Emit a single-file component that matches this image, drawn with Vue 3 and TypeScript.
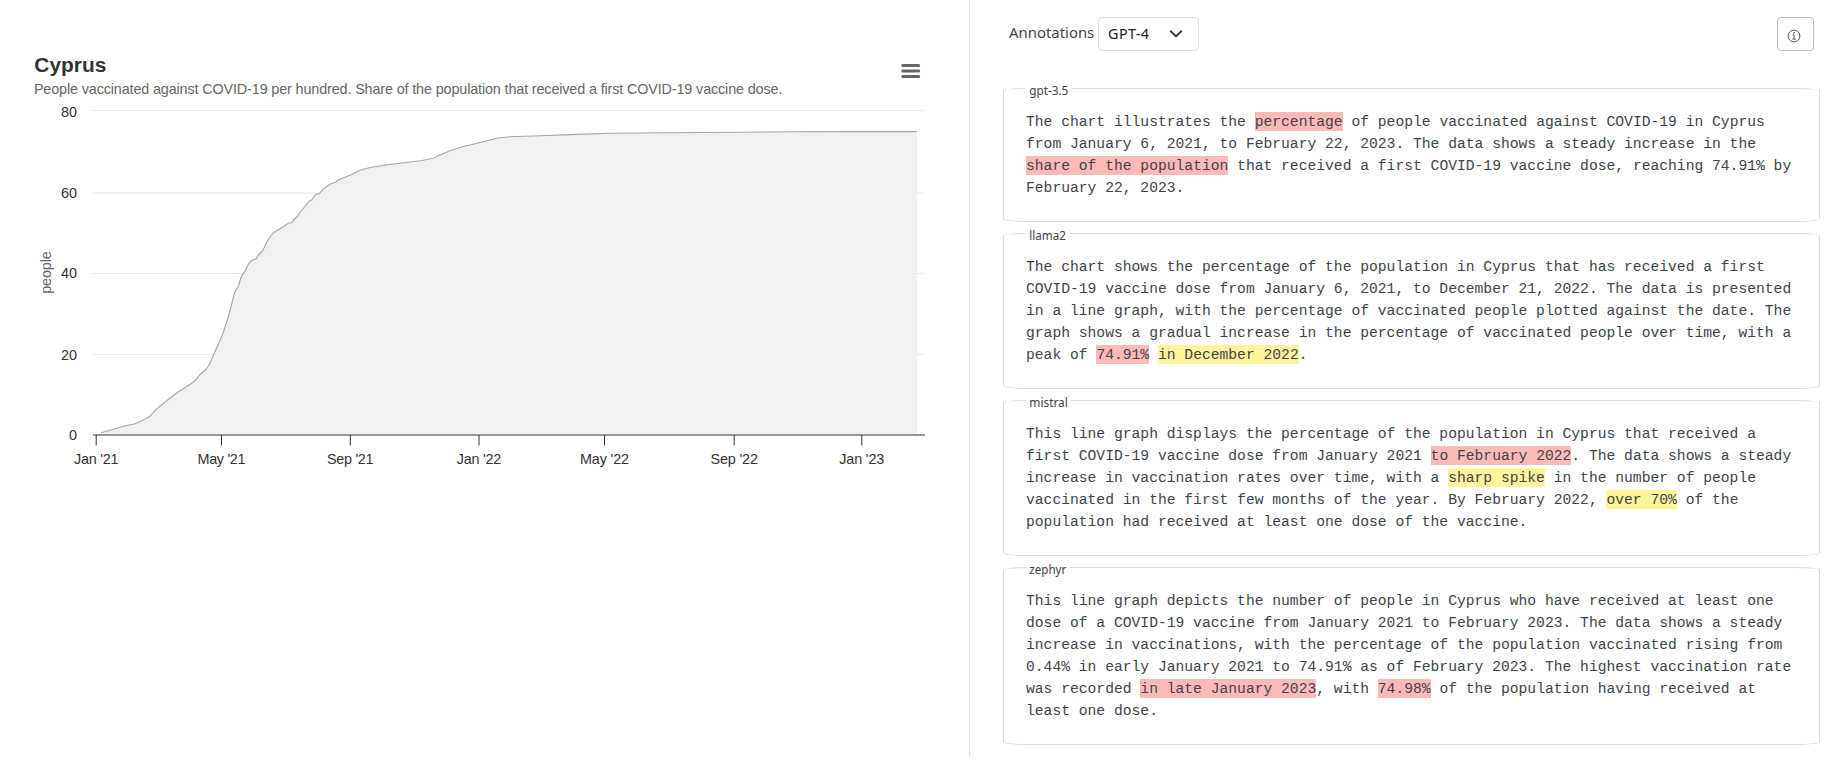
<script setup lang="ts">
interface Segment {
  text: string
  mark?: 'red' | 'yellow'
}

interface Annotation {
  model: string
  legendWidth: number
  textWidth: number
  lines: Segment[][]
}

const plain = (text: string): Segment[] => [{ text }]

const annotations: Annotation[] = [
  {
    model: 'gpt-3.5',
    legendWidth: 46,
    textWidth: 39,
    lines: [
      [{ text: 'The chart illustrates the ' }, { text: 'percentage', mark: 'red' }, { text: ' of people vaccinated against COVID-19 in Cyprus' }],
      plain('from January 6, 2021, to February 22, 2023. The data shows a steady increase in the'),
      [{ text: 'share of the population', mark: 'red' }, { text: ' that received a first COVID-19 vaccine dose, reaching 74.91% by' }],
      plain('February 22, 2023.'),
    ],
  },
  {
    model: 'llama2',
    legendWidth: 44,
    textWidth: 36.5,
    lines: [
      plain('The chart shows the percentage of the population in Cyprus that has received a first'),
      plain('COVID-19 vaccine dose from January 6, 2021, to December 21, 2022. The data is presented'),
      plain('in a line graph, with the percentage of vaccinated people plotted against the date. The'),
      plain('graph shows a gradual increase in the percentage of vaccinated people over time, with a'),
      [{ text: 'peak of ' }, { text: '74.91%', mark: 'red' }, { text: ' ' }, { text: 'in December 2022', mark: 'yellow' }, { text: '.' }],
    ],
  },
  {
    model: 'mistral',
    legendWidth: 45,
    textWidth: 38.5,
    lines: [
      plain('This line graph displays the percentage of the population in Cyprus that received a'),
      [{ text: 'first COVID-19 vaccine dose from January 2021 ' }, { text: 'to February 2022', mark: 'red' }, { text: '. The data shows a steady' }],
      [{ text: 'increase in vaccination rates over time, with a ' }, { text: 'sharp spike', mark: 'yellow' }, { text: ' in the number of people' }],
      [{ text: 'vaccinated in the first few months of the year. By February 2022, ' }, { text: 'over 70%', mark: 'yellow' }, { text: ' of the' }],
      plain('population had received at least one dose of the vaccine.'),
    ],
  },
  {
    model: 'zephyr',
    legendWidth: 44,
    textWidth: 37,
    lines: [
      plain('This line graph depicts the number of people in Cyprus who have received at least one'),
      plain('dose of a COVID-19 vaccine from January 2021 to February 2023. The data shows a steady'),
      plain('increase in vaccinations, with the percentage of the population vaccinated rising from'),
      plain('0.44% in early January 2021 to 74.91% as of February 2023. The highest vaccination rate'),
      [{ text: 'was recorded ' }, { text: 'in late January 2023', mark: 'red' }, { text: ', with ' }, { text: '74.98%', mark: 'red' }, { text: ' of the population having received at' }],
      plain('least one dose.'),
    ],
  },
]

const yTicks = [
  { label: '80', line: 110.5, base: 116.5 },
  { label: '60', line: 193, base: 197.5 },
  { label: '40', line: 273.5, base: 277.5 },
  { label: '20', line: 354.6, base: 359.5 },
]

const xTicks = [
  { label: "Jan '21", x: 96.2, width: 44.5 },
  { label: "May '21", x: 221.5, width: 48 },
  { label: "Sep '21", x: 350.3, width: 46.5 },
  { label: "Jan '22", x: 479, width: 44.5 },
  { label: "May '22", x: 604.5, width: 49 },
  { label: "Sep '22", x: 734.2, width: 47.5 },
  { label: "Jan '23", x: 861.8, width: 45 },
]

const curve: [number, number][] = [
  [101, 432.7], [111, 430], [121, 427], [128, 425.3], [134.5, 424], [141, 421], [149, 417],
  [152, 414], [155, 410.3], [165, 402], [178, 392], [193, 382.5], [197, 378.5], [200, 374.5],
  [206.5, 369], [210, 363], [213, 356], [217, 347], [222, 336], [227, 321], [231, 307],
  [232.8, 299.5], [234, 294.5], [236, 289.5], [238, 287.3], [239.3, 283], [241, 277.5],
  [243, 273.6], [245, 271.5], [247, 266.5], [250, 261.8], [252.5, 260], [256, 259], [258, 255.5],
  [262, 251.5], [264, 248], [266, 243.5], [269, 238.5], [273, 233], [278, 230], [284, 226.3],
  [288, 223.5], [292, 222.2], [294, 219.3], [297, 217], [301, 210.8], [305, 206.5], [309, 201.3],
  [312, 199.8], [315, 195.2], [320, 193], [323.5, 188.7], [329, 185], [332, 183.2], [335.5, 182.3],
  [338.5, 180], [345, 177.3], [352, 174.3], [360, 170.3], [370, 167.5], [382, 165.5], [396, 163.7],
  [410, 162], [422, 160.5], [433, 158.3], [440, 155], [450, 150.7], [465, 146], [471, 144.7],
  [483, 141.7], [498, 138], [510, 136.7], [540, 135.8], [570, 134.6], [610, 133.3], [670, 132.7],
  [740, 132.2], [800, 131.8], [850, 131.6], [917, 131.6],
]

const linePoints = curve.map((p) => p.join(',')).join(' ')
const areaPoints = `101,434.5 ${linePoints} 917,434.5`
</script>

<template>
  <main class="page">
    <section class="chart-pane">
      <svg class="chart" width="969" height="500" viewBox="0 0 969 500">
        <text class="title" x="34.3" y="71.6" textLength="72" lengthAdjust="spacingAndGlyphs">Cyprus</text>
        <text class="subtitle" x="33.9" y="94" textLength="748.5">People vaccinated against COVID-19 per hundred. Share of the population that received a first COVID-19 vaccine dose.</text>

        <g v-for="tick in yTicks" :key="tick.label">
          <line class="grid" x1="93" x2="925" :y1="tick.line" :y2="tick.line" />
          <text class="label" x="77.1" :y="tick.base" text-anchor="end">{{ tick.label }}</text>
        </g>
        <text class="label" x="77.1" y="440" text-anchor="end">0</text>
        <text class="axis-title" transform="translate(50.5 272.5) rotate(-90)" text-anchor="middle" textLength="42.5">people</text>

        <polygon class="area" :points="areaPoints" />
        <line class="axis" x1="93" x2="925" y1="435" y2="435" />
        <g v-for="tick in xTicks" :key="tick.label">
          <line class="tick" :x1="tick.x" :x2="tick.x" y1="435" y2="445.5" />
          <text class="label" :x="tick.x" y="463.7" text-anchor="middle" :textLength="tick.width">{{ tick.label }}</text>
        </g>
        <polyline class="curve" :points="linePoints" />

        <path class="menu" d="M902.8 65.4H918.6M902.8 71H918.6M902.8 76.5H918.6" />
      </svg>
    </section>

    <section class="notes-pane">
      <header class="toolbar">
        <span class="toolbar-label">Annotations</span>
        <button class="select" type="button">
          <span class="select-value">GPT-4</span>
          <svg width="14" height="10" viewBox="0 0 14 10"><path d="M1.8 2.2 L7 7.4 L12.2 2.2" /></svg>
        </button>
        <button class="info" type="button" aria-label="Info">
          <svg width="14" height="14" viewBox="0 0 14 14">
            <circle cx="7" cy="7" r="5.9" />
            <path class="stem" d="M5.6 5.9H7.1V10M5.4 10.1H8.7" />
            <rect x="6.3" y="3" width="1.4" height="1.5" />
          </svg>
        </button>
      </header>

      <article v-for="item in annotations" :key="item.model" class="card">
        <svg class="legend" :width="item.legendWidth" height="20">
          <text x="3.3" y="13.2" :textLength="item.textWidth" lengthAdjust="spacingAndGlyphs">{{ item.model }}</text>
        </svg>
        <p v-for="(line, n) in item.lines" :key="n" class="line"><span v-for="(part, i) in line" :key="i" :class="part.mark">{{ part.text }}</span></p>
      </article>
    </section>
  </main>
</template>

<style>
body {
  background: #fff;
}
</style>

<style scoped>
.page {
  display: flex;
  width: 1844px;
  height: 775px;
  overflow: hidden;
  color: #40444c;
}

.chart-pane {
  box-sizing: border-box;
  width: 970px;
  height: 756px;
  border-right: 1px solid #dcdcdc;
}

.chart {
  display: block;
  font-family: "Liberation Sans", Arial, sans-serif;
  font-size: 14.4px;
}

.title {
  font-size: 20.7px;
  font-weight: bold;
  fill: #333;
}

.subtitle,
.axis-title {
  fill: #666;
}

.label {
  fill: #333;
}

.grid {
  stroke: #e6e6e6;
}

.area {
  fill: #f1f1f1;
}

.axis {
  stroke: #333;
}

.tick {
  stroke: #333;
}

.curve {
  fill: none;
  stroke: #a6a6a6;
  stroke-width: 1.1;
  stroke-linejoin: round;
}

.menu {
  stroke: #666;
  stroke-width: 3;
  stroke-linecap: round;
}

.notes-pane {
  display: flex;
  flex-direction: column;
  gap: 11px;
  width: 817px;
  margin-left: 33px;
}

.toolbar {
  box-sizing: border-box;
  display: flex;
  align-items: center;
  height: 77px;
  padding: 17px 6px 26px;
  font-family: "Noto Sans", sans-serif;
}

.toolbar-label {
  width: 89px;
  margin-top: -5px;
  font-size: 14.9px;
  line-height: 22px;
  white-space: nowrap;
}

.select,
.info {
  box-sizing: border-box;
  display: flex;
  align-items: center;
  height: 34px;
  background: #fff;
  border: 1px solid #dcdfe3;
  border-radius: 4px;
}

.select {
  justify-content: space-between;
  width: 101px;
  padding: 0 15px 0 9px;
  color: #212429;
  font-family: "Noto Sans", sans-serif;
  font-size: 14.4px;
}

.select-value {
  margin-top: -2px;
  letter-spacing: 0.4px;
}

.select path {
  fill: none;
  stroke: #343a40;
  stroke-width: 2;
  stroke-linecap: round;
  stroke-linejoin: round;
}

.info {
  width: 37px;
  margin-left: auto;
  margin-right: 0;
  padding: 3px 0 0 9px;
  border-color: #bfbfbf;
}

.info circle,
.info .stem {
  fill: none;
  stroke: #555;
  stroke-width: 1;
}

.info rect {
  fill: #555;
}

.card {
  position: relative;
  box-sizing: border-box;
  padding: 22px 0 22px 22px;
  border: 1px solid #dadada;
  border-radius: 24px / 3px;
}

.legend {
  position: absolute;
  top: -7px;
  left: 22px;
  background: #fff;
  fill: #40444c;
  font-family: "Noto Sans", sans-serif;
  font-size: 12px;
}

.line {
  height: 22px;
  margin: 0;
  font-family: "Liberation Mono", monospace;
  font-size: 14.667px;
  line-height: 22px;
  white-space: pre;
}

.red,
.yellow {
  display: inline-block;
  height: 19px;
  line-height: 21px;
}

.red {
  background: #ffb9b9;
}

.yellow {
  background: #fff59b;
}
</style>
